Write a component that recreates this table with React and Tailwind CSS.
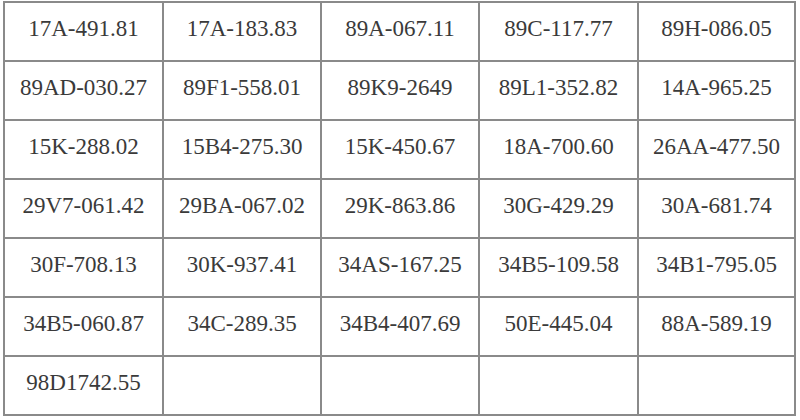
import React from "react";

const cells = [
  "17A-491.81", "17A-183.83", "89A-067.11", "89C-117.77", "89H-086.05",
  "89AD-030.27", "89F1-558.01", "89K9-2649", "89L1-352.82", "14A-965.25",
  "15K-288.02", "15B4-275.30", "15K-450.67", "18A-700.60", "26AA-477.50",
  "29V7-061.42", "29BA-067.02", "29K-863.86", "30G-429.29", "30A-681.74",
  "30F-708.13", "30K-937.41", "34AS-167.25", "34B5-109.58", "34B1-795.05",
  "34B5-060.87", "34C-289.35", "34B4-407.69", "50E-445.04", "88A-589.19",
  "98D1742.55", "", "", "", "",
];

export default function App() {
  return (
    <div
      className="w-[800px] h-[420px] bg-white pl-[3px] pt-[1px] overflow-hidden font-serif text-[23px] text-[#3a3a3a]"
      style={{ fontFamily: "Liberation Serif" }}
    >
      <div className="grid grid-cols-[159px_158px_158px_159px_157px] auto-rows-[59px] w-[793px] border-l-2 border-t-2 border-[#8a8a8a]">
        {cells.map((c, i) => (
          <div
            key={i}
            className="flex items-center justify-center border-r-2 border-b-2 border-[#8a8a8a] pb-[5px]"
          >
            <span className="font-serif" style={{ fontFamily: "Liberation Serif" }}>
              {c}
            </span>
          </div>
        ))}
      </div>
    </div>
  );
}
